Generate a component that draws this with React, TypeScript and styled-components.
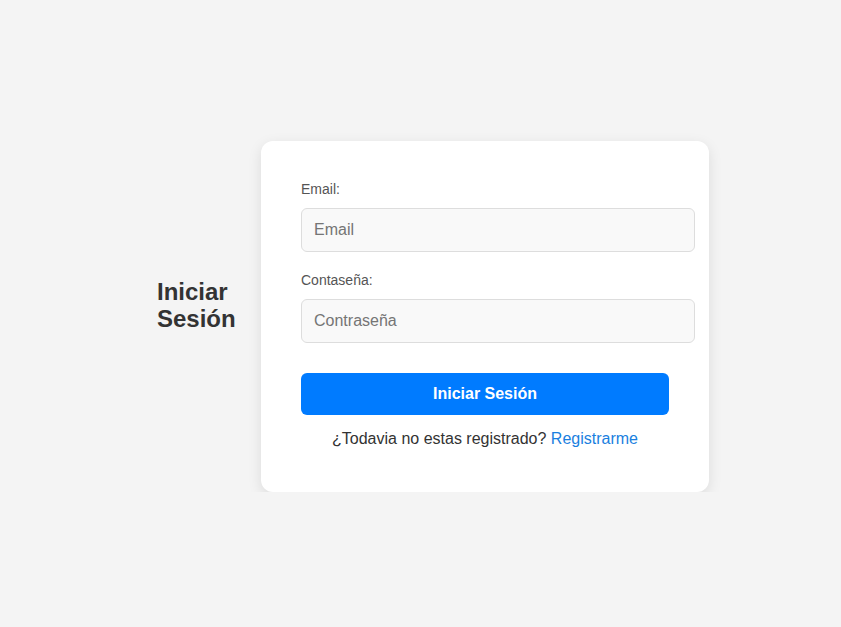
import React, { useState } from 'react';
import styled, { createGlobalStyle } from 'styled-components';

const colors = {
  background: '#f4f4f4',
  title: '#333333',
  label: '#555555',
  inputBg: '#f9f9f9',
  inputBorder: '#dddddd',
  primary: '#007bff',
  link: '#1a7fe0',
};

const GlobalStyle = createGlobalStyle`
  html, body {
    margin: 0;
    padding: 0;
    background-color: ${colors.background};
    font-family: "Liberation Sans", Arial, sans-serif;
  }
  * {
    font-family: "Liberation Sans", Arial, sans-serif;
  }
`;

export default function App() {
  const [email, setEmail] = useState('');
  const [password, setPassword] = useState('');

  const handleSubmit = (e: React.FormEvent<HTMLFormElement>) => {
    e.preventDefault();
  };

  return (
    <>
      <GlobalStyle />
      <PageWrapper>
        <Title>
          Iniciar
          <br />
          Sesión
        </Title>
        <Card onSubmit={handleSubmit}>
          <Field>
            <Label htmlFor="email">Email:</Label>
            <Input
              id="email"
              type="email"
              placeholder="Email"
              value={email}
              onChange={(e) => setEmail(e.target.value)}
            />
          </Field>
          <Field $last>
            <Label htmlFor="password">Contaseña:</Label>
            <Input
              id="password"
              type="password"
              placeholder="Contraseña"
              value={password}
              onChange={(e) => setPassword(e.target.value)}
            />
          </Field>
          <SubmitButton type="submit">Iniciar Sesión</SubmitButton>
          <RegisterText>
            ¿Todavia no estas registrado? <RegisterLink href="#">Registrarme</RegisterLink>
          </RegisterText>
        </Card>
      </PageWrapper>
    </>
  );
}

const PageWrapper = styled.div`
  display: flex;
  align-items: center;
  margin-top: 141px;
  padding-left: 157px;
`;

const Title = styled.h2`
  margin: 0 26px 23px 0;
  width: 78px;
  font-size: 24px;
  line-height: 27.5px;
  font-weight: bold;
  color: ${colors.title};
`;

const Card = styled.form`
  width: 448px;
  height: 351px;
  box-sizing: border-box;
  padding: 40px;
  background-color: #ffffff;
  border-radius: 12px;
  box-shadow: 0 4px 14px rgba(0, 0, 0, 0.1);
  display: flex;
  flex-direction: column;
`;

const Field = styled.div<{ $last?: boolean }>`
  display: flex;
  flex-direction: column;
  margin-bottom: ${({ $last }) => ($last ? '30px' : '20px')};
`;

const Label = styled.label`
  font-size: 14px;
  line-height: 16px;
  color: ${colors.label};
  margin: 0 0 11px;
`;

const Input = styled.input`
  width: 368px;
  height: 18px;
  padding: 12px;
  font-size: 16px;
  color: #333;
  background-color: ${colors.inputBg};
  border: 1px solid ${colors.inputBorder};
  border-radius: 6px;
  outline: none;
  &::placeholder {
    color: #757575;
  }
`;

const SubmitButton = styled.button`
  width: 368px;
  height: 42px;
  background-color: ${colors.primary};
  color: #ffffff;
  font-size: 16px;
  font-weight: bold;
  border: none;
  border-radius: 6px;
  cursor: pointer;
`;

const RegisterText = styled.p`
  width: 368px;
  margin: 15px 0 0;
  text-align: center;
  font-size: 16px;
  line-height: 18px;
  color: ${colors.title};
`;

const RegisterLink = styled.a`
  color: ${colors.link};
  text-decoration: none;
`;
